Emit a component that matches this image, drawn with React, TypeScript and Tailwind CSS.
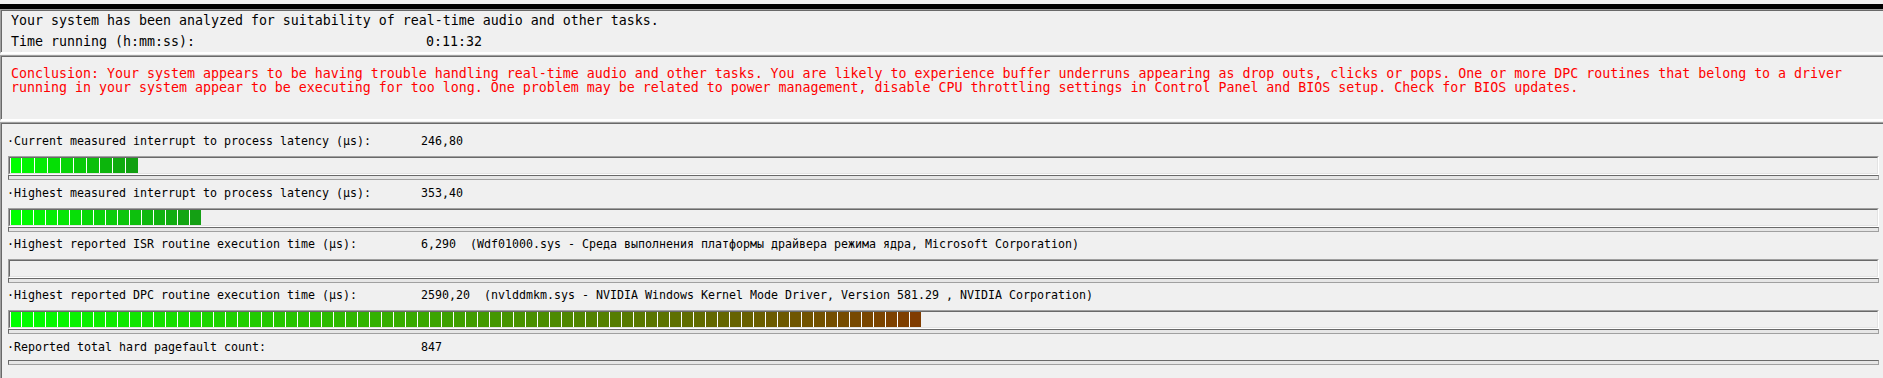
import React from "react";

type RGB = [number, number, number];

function segColor(from: RGB, to: RGB, t: number) {
  const c = from.map((a, i) => Math.round(a + (to[i] - a) * t));
  return `rgb(${c[0]},${c[1]},${c[2]})`;
}

function Segments({ count, pitch, to }: { count: number; pitch: 12 | 13; to: RGB }) {
  const from: RGB = [0, 255, 0];
  return (
    <>
      {Array.from({ length: count }).map((_, i) => {
        const t = count > 1 ? i / (count - 1) : 0;
        const w =
          i === 0 ? "w-[11px]" : pitch === 13 ? "w-[13px]" : "w-[12px]";
        return (
          <div
            key={i}
            className={`${w} h-full flex-none border-l border-l-white`}
            style={{ backgroundColor: segColor(from, to, t) }}
          />
        );
      })}
    </>
  );
}

function BarBox({ children }: { children?: React.ReactNode }) {
  return (
    <div className="ml-[6px] mr-[4px] h-[19px] border-t border-l border-r border-b border-t-[#a0a0a0] border-l-[#a0a0a0] border-r-white border-b-white">
      <div className="flex h-full border-t border-l border-r border-b border-t-[#696969] border-l-[#696969] border-r-[#e3e3e3] border-b-[#e3e3e3] overflow-hidden">
        {children}
      </div>
    </div>
  );
}

function ThinBox() {
  return (
    <div className="ml-[6px] mr-[4px] h-[5px] border-t border-l border-r border-b border-t-[#696969] border-l-[#696969] border-r-[#a0a0a0] border-b-[#a0a0a0] bg-[#e6e6e6]" />
  );
}

function Label({ label, value }: { label: string; value: string }) {
  return (
    <div className="flex h-4 pl-[5px] leading-4 whitespace-pre text-black">
      <div className="w-[414px] flex-none">{label}</div>
      <div>{value}</div>
    </div>
  );
}

export default function App() {
  const mono = "font-['DejaVu_Sans_Mono','Liberation_Mono',monospace]";
  return (
    <div className={`h-[378px] w-[1883px] overflow-hidden bg-[#f0f0f0] ${mono}`}>
      <div className="h-[4px] bg-[#f0f0f0]" />
      <div className="h-[5px] bg-black" />

      {/* Panel 1 */}
      <div className="border-t border-l border-b-2 border-t-[#a0a0a0] border-l-[#a0a0a0] border-b-white">
        <div className="border-t border-l border-t-[#696969] border-l-[#696969] h-[42px] pl-[9px] pt-[2px] text-[13.29px] leading-4 text-black whitespace-pre">
          <div className="h-4">Your system has been analyzed for suitability of real-time audio and other tasks.</div>
          <div className="mt-[5px] flex h-4">
            <div className="w-[415px] flex-none">Time running (h:mm:ss):</div>
            <div>0:11:32</div>
          </div>
        </div>
      </div>

      <div className="h-px" />

      {/* Panel 2 */}
      <div className="border-t border-l border-b-2 border-t-[#a0a0a0] border-l-[#a0a0a0] border-b-white">
        <div className="border-t border-l border-t-[#696969] border-l-[#696969] h-[63px] pl-[9px] pt-[10px] text-[13.29px] leading-[14px] text-[#ff0000] whitespace-pre">
          <div>Conclusion: Your system appears to be having trouble handling real-time audio and other tasks. You are likely to experience buffer underruns appearing as drop outs, clicks or pops. One or more DPC routines that belong to a driver</div>
          <div>running in your system appear to be executing for too long. One problem may be related to power management, disable CPU throttling settings in Control Panel and BIOS setup. Check for BIOS updates.</div>
        </div>
      </div>

      <div className="h-px" />

      {/* Panel 3 */}
      <div className="border-t border-l border-t-[#a0a0a0] border-l-[#a0a0a0] h-[257px]">
        <div className="border-t border-l border-t-[#696969] border-l-[#696969] h-full text-[11.63px]">
          <div className="pt-[9px]">
            <Label label="·Current measured interrupt to process latency (µs):" value="246,80" />
            <div className="h-[7px]" />
            <BarBox>
              <Segments count={10} pitch={13} to={[16, 160, 16]} />
            </BarBox>
            <ThinBox />
          </div>
          <div className="pt-[5px]">
            <Label label="·Highest measured interrupt to process latency (µs):" value="353,40" />
            <div className="h-[7px]" />
            <BarBox>
              <Segments count={16} pitch={12} to={[20, 160, 20]} />
            </BarBox>
            <ThinBox />
          </div>
          <div className="pt-[4px]">
            <Label
              label="·Highest reported ISR routine execution time (µs):"
              value="6,290  (Wdf01000.sys - Среда выполнения платформы драйвера режима ядра, Microsoft Corporation)"
            />
            <div className="h-[7px]" />
            <BarBox />
            <ThinBox />
          </div>
          <div className="pt-[4px]">
            <Label
              label="·Highest reported DPC routine execution time (µs):"
              value="2590,20  (nvlddmkm.sys - NVIDIA Windows Kernel Mode Driver, Version 581.29 , NVIDIA Corporation)"
            />
            <div className="h-[7px]" />
            <BarBox>
              <Segments count={76} pitch={12} to={[128, 60, 0]} />
            </BarBox>
            <ThinBox />
          </div>
          <div className="pt-[5px]">
            <Label label="·Reported total hard pagefault count:" value="847" />
            <div className="h-[5px]" />
            <ThinBox />
          </div>
        </div>
      </div>
    </div>
  );
}
